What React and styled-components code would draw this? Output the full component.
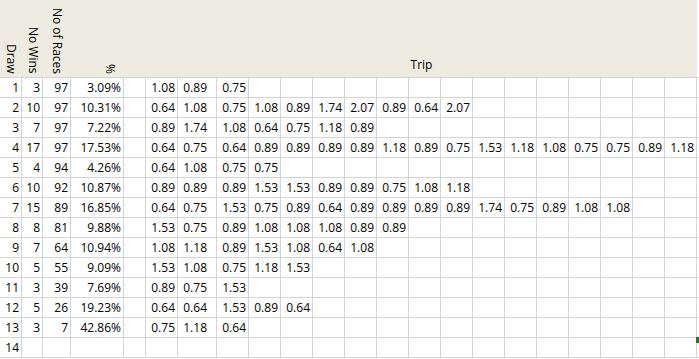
import React from "react";
import styled, { createGlobalStyle } from "styled-components";

const GlobalStyle = createGlobalStyle`
  html, body {
    margin: 0;
    padding: 0;
    background: #fff;
    overflow: hidden;
  }
  body {
    font-family: "Open Sans", "Liberation Sans", sans-serif;
  }
`;

// column widths, right gridline included
const widths = [22, 21, 28, 53, 22, 32, 39, 32, ...Array(14).fill(32), 3];

const rows = [
  [1, 3, 97, "3.09%", ["1.08", "0.89", "0.75"]],
  [2, 10, 97, "10.31%", ["0.64", "1.08", "0.75", "1.08", "0.89", "1.74", "2.07", "0.89", "0.64", "2.07"]],
  [3, 7, 97, "7.22%", ["0.89", "1.74", "1.08", "0.64", "0.75", "1.18", "0.89"]],
  [4, 17, 97, "17.53%", ["0.64", "0.75", "0.64", "0.89", "0.89", "0.89", "0.89", "1.18", "0.89", "0.75", "1.53", "1.18", "1.08", "0.75", "0.75", "0.89", "1.18"]],
  [5, 4, 94, "4.26%", ["0.64", "1.08", "0.75", "0.75"]],
  [6, 10, 92, "10.87%", ["0.89", "0.89", "0.89", "1.53", "1.53", "0.89", "0.89", "0.75", "1.08", "1.18"]],
  [7, 15, 89, "16.85%", ["0.64", "0.75", "1.53", "0.75", "0.89", "0.64", "0.89", "0.89", "0.89", "0.89", "1.74", "0.75", "0.89", "1.08", "1.08"]],
  [8, 8, 81, "9.88%", ["1.53", "0.75", "0.89", "1.08", "1.08", "1.08", "0.89", "0.89"]],
  [9, 7, 64, "10.94%", ["1.08", "1.18", "0.89", "1.53", "1.08", "0.64", "1.08"]],
  [10, 5, 55, "9.09%", ["1.53", "1.08", "0.75", "1.18", "1.53"]],
  [11, 3, 39, "7.69%", ["0.89", "0.75", "1.53"]],
  [12, 5, 26, "19.23%", ["0.64", "0.64", "1.53", "0.89", "0.64"]],
  [13, 3, 7, "42.86%", ["0.75", "1.18", "0.64"]],
  [14, "", "", "", []],
];

const Viewport = styled.div`
  width: 699px;
  height: 359px;
  overflow: hidden;
`;

const Sheet = styled.div`
  position: relative;
  display: grid;
  grid-template-columns: ${widths.map((w) => w + "px").join(" ")};
  grid-template-rows: 78px;
  grid-auto-rows: 20px;
  width: max-content;
  font-size: 12px;
  color: #000;
`;

const HeadCell = styled.div`
  box-sizing: border-box;
  grid-column: span ${(p) => p.$span || 1};
  background: ${(p) => (p.$blank ? "#fff" : "#eeece1")};
  border-bottom: 1px solid #d4d4d4;
  border-right: ${(p) => (p.$blank ? "1px solid #d4d4d4" : "none")};
  display: flex;
  align-items: flex-end;
  justify-content: ${(p) => p.$justify || "center"};
  padding: 0 ${(p) => p.$pr || 0}px ${(p) => (p.$pb === undefined ? 3 : p.$pb)}px 0;
  overflow: hidden;
`;

const VText = styled.span`
  writing-mode: vertical-rl;
  line-height: 14px;
  white-space: nowrap;
`;

const HText = styled.span`
  line-height: 16px;
  white-space: nowrap;
`;

const Cell = styled.div`
  box-sizing: border-box;
  border-right: 1px solid #d4d4d4;
  border-bottom: 1px solid #d4d4d4;
  text-align: right;
  padding: 1px ${(p) => (p.$pr === undefined ? 2 : p.$pr)}px 0 0;
  line-height: 18px;
  white-space: nowrap;
  overflow: hidden;
`;

const FillHandle = styled.div`
  position: absolute;
  left: 696px;
  top: 337px;
  width: 3px;
  height: 6px;
  background: #1f7a24;
`;

const App = () => {
  return (
    <Viewport>
      <GlobalStyle />
      <Sheet>
        <HeadCell>
          <VText>Draw</VText>
        </HeadCell>
        <HeadCell>
          <VText>No Wins</VText>
        </HeadCell>
        <HeadCell>
          <VText>No of Races</VText>
        </HeadCell>
        <HeadCell $justify="flex-end" $pr={7}>
          <VText>%</VText>
        </HeadCell>
        <HeadCell />
        <HeadCell $span={17} $pb={4}>
          <HText>Trip</HText>
        </HeadCell>
        <HeadCell $blank />

        {rows.map(([draw, wins, races, pct, trips], r) => (
          <React.Fragment key={r}>
            <Cell>{draw}</Cell>
            <Cell>{wins}</Cell>
            <Cell>{races}</Cell>
            <Cell>{pct}</Cell>
            <Cell />
            {Array.from({ length: 17 }, (_, i) => (
              <Cell key={i} $pr={i === 1 ? 9 : 2}>
                {trips[i] || ""}
              </Cell>
            ))}
            <Cell />
          </React.Fragment>
        ))}
        <FillHandle />
      </Sheet>
    </Viewport>
  );
};

export default App;
